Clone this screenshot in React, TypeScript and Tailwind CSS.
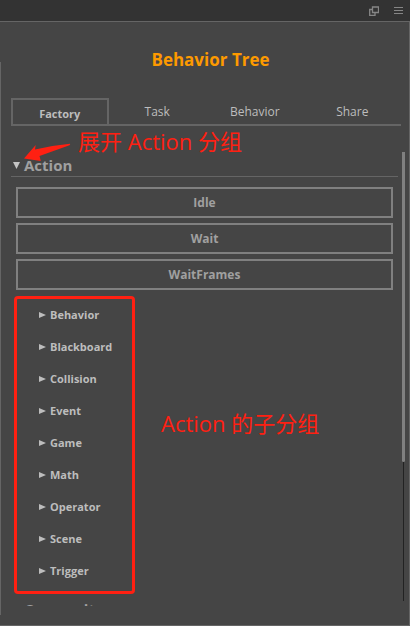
import { useState } from "react";

const tabs = ["Factory", "Task", "Behavior", "Share"];

const actionNodes = ["Idle", "Wait", "WaitFrames"];

const actionGroups = [
  "Behavior",
  "Blackboard",
  "Collision",
  "Event",
  "Game",
  "Math",
  "Operator",
  "Scene",
  "Trigger",
];

function TitleBar() {
  return (
    <header className="flex h-[22px] shrink-0 items-center justify-end gap-3 border-b border-[#656565] bg-[#333333] pr-[7px] text-[#868686]">
      <button aria-label="Pop out panel" className="flex size-4 items-center justify-center" type="button">
        <svg fill="none" height="10" viewBox="0 0 10 10" width="10">
          <path d="M3.500 1h6v5.500h-6z" stroke="currentColor" strokeWidth="1.300" />
          <path d="M3 3.500H.7v6H6V7" stroke="currentColor" strokeWidth="1.300" />
        </svg>
      </button>
      <button aria-label="Panel menu" className="flex h-4 w-[9px] items-center justify-center" type="button">
        <svg fill="none" height="9" viewBox="0 0 9 9" width="9">
          <path d="M0 1.500h9M0 4.500h9M0 7.500h9" stroke="currentColor" />
        </svg>
      </button>
    </header>
  );
}

function Tabs({ active, onSelect }: { readonly active: string; readonly onSelect: (tab: string) => void }) {
  return (
    <div className="mr-2 ml-[10px] grid grid-cols-4 border-b-2 border-[#656565]" role="tablist">
      {tabs.map((tab) => (
        <button
          aria-selected={tab === active}
          className={[
            "h-[26px] border-2 border-b-0 leading-4",
            tab === active ? "border-[#656565] pt-1 text-[11px] font-bold" : "border-transparent text-xs",
          ].join(" ")}
          key={tab}
          onClick={() => onSelect(tab)}
          role="tab"
          type="button"
        >
          {tab}
        </button>
      ))}
    </div>
  );
}

function GroupHeading({
  expanded,
  label,
  onToggle,
}: {
  readonly expanded: boolean;
  readonly label: string;
  readonly onToggle?: () => void;
}) {
  return (
    <button
      aria-expanded={expanded}
      className="flex h-[25px] w-full items-center gap-1 border-b border-[#656565] pt-[2px] pl-[2px] text-left text-[15px] leading-5 font-bold text-[#a0a0a0]"
      onClick={onToggle}
      type="button"
    >
      <svg className="text-[#c4c4c4]" fill="currentColor" height="7" viewBox="0 0 7 7" width="7">
        {expanded ? <path d="M0 0h7L3.500 7z" /> : <path d="M0 0l7 3.500L0 7z" />}
      </svg>
      {label}
    </button>
  );
}

function SubGroup({ label }: { readonly label: string }) {
  return (
    <li>
      <button aria-expanded={false} className="flex h-8 items-center gap-1 text-[11px] leading-4 font-bold" type="button">
        <svg fill="currentColor" height="6" viewBox="0 0 7 6" width="7">
          <path d="M0 0l7 3L0 6z" />
        </svg>
        {label}
      </button>
    </li>
  );
}

export default function App() {
  const [activeTab, setActiveTab] = useState("Factory");
  const [expanded, setExpanded] = useState(true);

  return (
    <div className="relative flex h-screen flex-col overflow-hidden border-b border-[#656565] bg-[#454545] font-['Open_Sans','Noto_Sans_CJK_SC',sans-serif] text-[#bdbdbd]">
      <TitleBar />
      <main className="flex min-h-0 flex-1 flex-col border-r border-[#656565] pb-[10px]">
        <h1 className="h-10 shrink-0 pt-6 pl-3 text-center text-[17px] leading-7 font-bold text-[#fd9a00]">
          Behavior Tree
        </h1>
        <div className="flex min-h-0 flex-1 flex-col border-l border-[#656565] pt-9 pb-[9px]">
          <Tabs active={activeTab} onSelect={setActiveTab} />
          <div className="mt-[26px] mr-1 ml-[10px] flex min-h-0 flex-1 gap-1">
            <section aria-label="Node factory" className="min-w-0 flex-1 overflow-x-hidden overflow-y-auto [scrollbar-width:none]">
              <GroupHeading expanded={expanded} label="Action" onToggle={() => setExpanded(!expanded)} />
              {expanded && (
                <>
                  <div className="flex flex-col gap-[5px] px-[5px] pt-[10px]">
                    {actionNodes.map((node) => (
                      <button
                        className="h-[31px] border-2 border-[#808080] text-xs font-bold text-[#a0a0a0]"
                        key={node}
                        type="button"
                      >
                        {node}
                      </button>
                    ))}
                  </div>
                  <div className="relative mt-[9px] mb-[9px]">
                    <ul className="pl-7">
                      {actionGroups.map((group) => (
                        <SubGroup key={group} label={group} />
                      ))}
                    </ul>
                    <div className="pointer-events-none absolute -top-[3px] -bottom-[7px] left-[3px] w-[121px] rounded border-3 border-[#ff2012]" />
                    <p className="absolute top-[108px] left-[150px] text-[22px] leading-8 text-[#ff2012]">
                      Action 的子分组
                    </p>
                  </div>
                </>
              )}
              <GroupHeading expanded label="Composite" />
            </section>
            <div aria-hidden="true" className="mb-[5px] flex w-[3px] shrink-0 justify-center bg-[linear-gradient(#222,#222)] bg-[length:1px_100%] bg-center bg-no-repeat">
              <div className="h-[69%] w-full rounded-b-sm bg-[#808080]" />
            </div>
          </div>
        </div>
      </main>
      <svg className="pointer-events-none absolute top-[143px] left-6" fill="#ff2012" height="19" viewBox="0 0 47 19" width="47">
        <path d="M0 15.500L11.700 2L11 6.500Q28 2.500 46 .8Q46.500 1.500 45.500 2.200L15.500 13L16.800 18Z" />
      </svg>
      <p className="pointer-events-none absolute top-[125px] left-[78px] text-[22px] leading-8 text-[#ff2012]">
        展开 Action 分组
      </p>
    </div>
  );
}
